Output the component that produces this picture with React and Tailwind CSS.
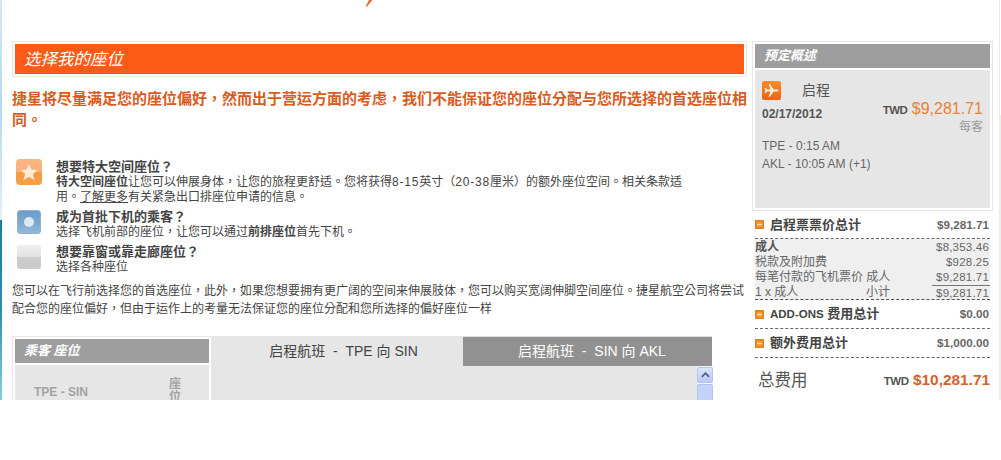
const CJK = { fontFamily: '"Liberation Sans","Noto Sans CJK TC","Noto Sans CJK SC",sans-serif' };

function Bullet() {
  return <span className="w-[9px] h-[9px] shrink-0 bg-[#f7a23a] border-2 border-[#e9831c] flex items-center"><span className="w-full h-px bg-white/70" /></span>;
}

function Row({ icon, title, children }) {
  return (
    <div className="flex">
      <div className="w-[44px] shrink-0">{icon}</div>
      <div className="text-[12px] leading-[15px] text-[#444]">
        <div className="font-bold text-[13px] leading-[16px] text-[#444]">{title}</div>
        {children}
      </div>
    </div>
  );
}

function Total({ label, value, className = "" }) {
  return (
    <div className={"flex items-center justify-between pr-[1px] border-b border-dashed border-[#666] " + className}>
      <span className="flex items-center gap-[6px] font-bold text-[13px] text-[#444]"><Bullet /><span>{label}</span></span>
      <span className="font-bold text-[11.7px] text-[#666]">{value}</span>
    </div>
  );
}

function Amount({ children, className = "" }) {
  return <span className={"text-[11.5px] tracking-[0.2px] " + className}>{children}</span>;
}

export default function App() {
  return (
    <div className="relative flex w-[1001px] h-[460px] bg-white overflow-hidden" style={CJK}>
      <svg className="absolute left-[364px] top-0 w-[9px] h-[7px]" viewBox="0 0 9 7"><path d="M5 0h3.500L3 6.500H1.500z" fill="#e9692a" /></svg>

      <div className="w-[2px] h-[400px] shrink-0 flex flex-col">
        <div className="h-[220px] bg-gradient-to-b from-[#d3e8f7] via-[#b3d8f1] to-[#e6eff9]" />
        <div className="h-[180px] bg-gradient-to-b from-[#1c7aa8] via-[#2a8db6] to-[#82d2dd]" />
      </div>

      <div className="flex w-[997px] h-[400px] shrink-0 overflow-hidden pl-[10px] pt-[41px]">
        <main className="w-[735px] shrink-0">
          <div className="border border-[#e6e6e6] p-[2px] h-[36px]">
            <div className="h-[30px] bg-[#fe5a17] pl-[9px] flex items-center text-white italic text-[16.5px]">选择我的座位</div>
          </div>
          <p className="mt-[11px] w-[737px] font-bold text-[15px] leading-[21px] text-[#d95c1f]">捷星将尽量满足您的座位偏好，然而出于营运方面的考虑，我们不能保证您的座位分配与您所选择的首选座位相同。</p>

          <div className="mt-[29px] w-[690px]">
            <Row title="想要特大空间座位？" icon={
              <div className="ml-[4px] w-[26px] h-[26px] rounded-[4px] flex items-center justify-center bg-[linear-gradient(#fbb683_0%,#fbb07a_50%,#f79a3e_50%,#f8a04a_100%)]">
                <svg viewBox="0 0 24 24" className="w-[20px] h-[20px]"><path fill="#fde9d6" d="M12 2l3 7 7.500.6-5.700 4.900 1.800 7.300L12 18l-6.600 3.800 1.800-7.300L1.500 9.600 9 9z" /></svg>
              </div>}>
              <div><b>特大空间座位</b>让您可以伸展身体，让您的旅程更舒适。您将获得<span className="tracking-[0.8px]">8-15</span>英寸（<span className="tracking-[0.8px]">20-38</span>厘米）的额外座位空间。相关条款适</div>
              <div>用。<u>了解更多</u>有关紧急出口排座位申请的信息。</div>
            </Row>
            <div className="mt-[4px]">
              <Row title="成为首批下机的乘客？" icon={
                <div className="ml-[5px] mt-[1px] w-[24px] h-[24px] rounded-[3px] flex items-center justify-center bg-[linear-gradient(#6d9dc6,#7aa8cf_50%,#94b8d8)] border border-[#8fb0cf]"><span className="w-[10px] h-[10px] rounded-full bg-[#dce8f4]" /></div>}>
                <div>选择飞机前部的座位，让您可以通过<b>前排座位</b>首先下机。</div>
              </Row>
            </div>
            <div className="mt-[4px]">
              <Row title="想要靠窗或靠走廊座位？" icon={
                <div className="ml-[5px] mt-[1px] w-[24px] h-[24px] rounded-[3px] bg-[linear-gradient(#efefef,#e2e2e2_50%,#cdcdcd_50%,#c9c9c9)]" />}>
                <div>选择各种座位</div>
              </Row>
            </div>
          </div>

          <p className="mt-[7px] w-[735px] text-[12px] leading-[18px] text-[#444]">您可以在飞行前选择您的首选座位，此外，如果您想要拥有更广阔的空间来伸展肢体，您可以购买宽阔伸脚空间座位。捷星航空公司将尝试配合您的座位偏好，但由于运作上的考量无法保证您的座位分配和您所选择的偏好座位一样</p>

          <div className="mt-[18px] flex w-[701px]">
            <div className="w-[199px] shrink-0 border-l border-t border-[#e6e6e6] p-[2px] h-[80px]">
              <div className="h-[24px] bg-[#9e9e9e] pl-[9px] flex items-center text-white italic font-bold text-[13px]">乘客 座位</div>
              <div className="mt-[2px] h-[60px] bg-[#e6e6e6] flex pt-[13px]">
                <span className="ml-[19px] w-[135px] font-bold text-[12px] text-[#a3a3a3] leading-[16px] pt-[6px]">TPE - SIN</span>
                <span className="w-[13px] font-bold text-[12px] text-[#a3a3a3] leading-[13px]">座位</span>
              </div>
            </div>
            <div className="flex-1 min-w-0">
              <div className="flex h-[30px]">
                <div className="w-[252px] bg-[#e6e6e6] flex items-center justify-center pl-[13px] text-[14px] text-[#444]">启程航班 &nbsp;-&nbsp; TPE 向 SIN</div>
                <div className="w-[249px] bg-[#919191] border-t border-[#dedede] flex items-center justify-center pl-[9px] text-[14px] text-white">启程航班 &nbsp;-&nbsp; SIN 向 AKL</div>
              </div>
              <div className="h-[50px] bg-[#e6e6e6] flex justify-end w-[502px]">
                <div className="w-[16px] pt-[1px] bg-[#f1f4fb] flex flex-col gap-[1px]">
                  <div className="h-[16px] bg-gradient-to-b from-[#dbe5fb] to-[#b9cbf5] border border-[#b4c5ec] rounded-[2px] flex items-center justify-center">
                    <svg viewBox="0 0 10 6" className="w-[9px] h-[6px]"><path d="M1 5l4-4 4 4" fill="none" stroke="#4d6185" strokeWidth="2" /></svg>
                  </div>
                  <div className="flex-1 bg-[#c3d3fa] border border-[#b4c5ec] rounded-t-[2px]" />
                </div>
              </div>
            </div>
          </div>
        </main>

        <aside className="w-[241px] ml-[5px] shrink-0">
          <div className="border border-[#e6e6e6] p-[2px] h-[170px] flex flex-col">
            <div className="h-[24px] bg-[#9e9e9e] pl-[9px] flex items-center text-white italic font-bold text-[13px]">预定概述</div>
            <div className="mt-[2px] flex-1 bg-[#e6e6e6] pl-[7px] pr-[7px] pt-[10px] text-[#555]">
              <div className="flex items-center">
                <div className="w-[19px] h-[19px] rounded-[2px] bg-gradient-to-b from-[#f98c2c] to-[#ee6210] flex items-center justify-center">
                  <svg viewBox="0 0 24 24" className="w-[15px] h-[15px]"><path fill="#fdf0e2" d="M23 12c0-1-1-1.600-2-1.600h-5.500L9.500 2H7.400l3 8.400H5L3 8H1l1.300 4L1 16h2l2-2.400h5.400L7.400 22h2.100l6-8.400H21c1 0 2-.6 2-1.600z" /></svg>
                </div>
                <span className="ml-[21px] text-[14px] text-[#555]">启程</span>
              </div>
              <div className="flex justify-between h-[36px]">
                <span className="mt-[4px] font-bold text-[12px] text-[#555]">02/17/2012</span>
                <div className="text-right -mt-[1px]">
                  <div className="leading-[18px]"><span className="font-bold text-[11.5px] text-[#555] tracking-[-0.5px]">TWD</span> <span className="text-[16px] text-[#ea8136]">$9,281.71</span></div>
                  <div className="text-[12px] text-[#999] leading-[16px]">每客</div>
                </div>
              </div>
              <div className="text-[12px] leading-[18px] text-[#666]">
                <div>TPE - 0:15 AM</div>
                <div>AKL - 10:05 AM (+1)</div>
              </div>
            </div>
          </div>

          <div className="ml-[3px] w-[235px]">
            <Total label="启程票票价总计" value="$9,281.71" className="h-[28px]" />
            <div className="border-b border-dashed border-[#555] bg-[#efefef] text-[12px] leading-[15px] text-[#666] h-[61px] pt-[1px]">
              <div className="flex justify-between"><span className="font-bold text-[#555]">成人</span><Amount className="pr-[1px]">$8,353.46</Amount></div>
              <div className="flex justify-between"><span>税款及附加费</span><Amount className="pr-[1px]">$928.25</Amount></div>
              <div className="flex justify-between"><span>每笔付款的飞机票价 成人</span><Amount className="pr-[1px]">$9,281.71</Amount></div>
              <div className="flex"><span className="w-[111px]">1 x 成人</span><span className="w-[66px]">小计</span><Amount className="flex-1 text-right pr-[1px] border-t border-[#777] leading-[14px]">$9,281.71</Amount></div>
            </div>
            <Total label={<><span className="text-[11.5px]">ADD-ONS</span> 费用总计</>} value="$0.00" className="h-[29px]" />
            <Total label="额外费用总计" value="$1,000.00" className="h-[29px]" />
            <div className="flex items-center justify-between h-[44px] pl-[3px]">
              <span className="text-[16.5px] text-[#555]">总费用</span>
              <span className="leading-none"><span className="font-bold text-[11.5px] text-[#555] tracking-[-0.5px]">TWD</span> <span className="font-bold text-[15.4px] text-[#d5622d]">$10,281.71</span></span>
            </div>
          </div>
        </aside>
      </div>

      <div className="w-[2px] h-[400px] shrink-0 flex flex-col items-start">
        <div className="w-px h-[115px] bg-[#ececec]" />
        <div className="w-[2px] h-[285px] bg-[#efefea]" />
      </div>
    </div>
  );
}
